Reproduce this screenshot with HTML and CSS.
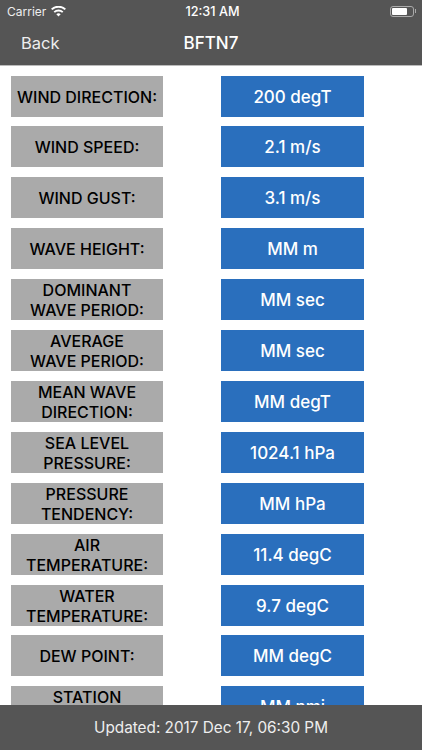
FILE: index.html
```html
<!DOCTYPE html>
<html lang="en">
<head>
<meta charset="utf-8">
<title>BFTN7</title>
<link rel="stylesheet" href="styles.css">
</head>
<body>
<div class="app">
  <header class="top">
    <div class="status">
      <div class="status-left">
        <span>Carrier</span>
        <svg class="wifi" width="15" height="11" viewBox="0 0 15 11"><path d="M7.5 10.6 5.3 8.2a3.2 3.2 0 0 1 4.4 0zM3.9 6.8 2.6 5.4a7.2 7.2 0 0 1 9.8 0l-1.3 1.4a5.3 5.3 0 0 0-7.2 0zM1.4 4.1 0 2.7a11 11 0 0 1 15 0l-1.4 1.4a9 9 0 0 0-12.2 0z" fill="#fff"/></svg>
      </div>
      <div class="status-time">12:31 AM</div>
      <div class="status-right">
        <div class="battery"><div class="battery-level"></div></div>
        <div class="battery-cap"></div>
      </div>
    </div>
    <nav class="nav">
      <span class="back">Back</span>
      <span class="title">BFTN7</span>
    </nav>
  </header>
  <main class="list">
    <div class="row"><div class="label">WIND DIRECTION:</div><div class="value">200 degT</div></div>
    <div class="row"><div class="label">WIND SPEED:</div><div class="value">2.1 m/s</div></div>
    <div class="row"><div class="label">WIND GUST:</div><div class="value">3.1 m/s</div></div>
    <div class="row"><div class="label">WAVE HEIGHT:</div><div class="value">MM m</div></div>
    <div class="row"><div class="label">DOMINANT<br>WAVE PERIOD:</div><div class="value">MM sec</div></div>
    <div class="row"><div class="label">AVERAGE<br>WAVE PERIOD:</div><div class="value">MM sec</div></div>
    <div class="row"><div class="label">MEAN WAVE<br>DIRECTION:</div><div class="value">MM degT</div></div>
    <div class="row"><div class="label">SEA LEVEL<br>PRESSURE:</div><div class="value">1024.1 hPa</div></div>
    <div class="row"><div class="label">PRESSURE<br>TENDENCY:</div><div class="value">MM hPa</div></div>
    <div class="row"><div class="label">AIR<br>TEMPERATURE:</div><div class="value">11.4 degC</div></div>
    <div class="row"><div class="label">WATER<br>TEMPERATURE:</div><div class="value">9.7 degC</div></div>
    <div class="row"><div class="label">DEW POINT:</div><div class="value">MM degC</div></div>
    <div class="row"><div class="label">STATION<br>DISTANCE:</div><div class="value">MM nmi</div></div>
  </main>
  <footer class="foot">Updated: 2017 Dec 17, 06:30 PM</footer>
</div>
</body>
</html>
```
FILE: styles.css
```css
* { box-sizing: border-box; }
html, body { margin: 0; padding: 0; }
body { font-family: Inter, "Liberation Sans", sans-serif; background: #fff; }
.app { width: 422px; height: 750px; display: flex; flex-direction: column; overflow: hidden; }
.top { flex: none; height: 66px; background: #555; color: #fff; border-bottom: 1px solid #bbb; }
.status { height: 22px; display: flex; align-items: center; justify-content: space-between; padding: 0 6px 0 7px; font-size: 12px; position: relative; }
.status-left { display: flex; align-items: center; gap: 5px; color: #eee; }
.status-time { position: absolute; left: 0; right: 0; text-align: center; font-weight: 500; font-size: 12.7px; padding-left: 3px; }
.status-right { display: flex; align-items: center; gap: 1px; }
.battery { width: 24px; height: 11px; border: 1px solid #aaa; border-radius: 3px; padding: 1px; }
.battery-level { width: 15px; height: 100%; background: #fff; border-radius: 1px; }
.battery-cap { width: 1px; height: 4px; background: #aaa; }
.nav { height: 43px; display: flex; align-items: center; position: relative; padding: 0 0 1px 21px; }
.back { color: #eee; font-size: 16.5px; }
.title { position: absolute; left: 0; right: 0; text-align: center; font-weight: 500; font-size: 17px; }
.list { flex: 1; min-height: 0; overflow: hidden; padding: 9.6px 0 0 11px; display: flex; flex-direction: column; gap: 9.9px; }
.row { flex: none; height: 41px; display: flex; gap: 58px; }
.label, .value { display: flex; align-items: center; justify-content: center; text-align: center; padding-top: 1px; }
.label { width: 152px; background: #aaa; color: #000; font-size: 16px; font-weight: 500; line-height: 20px; }
.value { width: 143px; background: #2a6fbd; color: #fff; font-size: 17px; font-weight: 500; }
.foot { flex: none; height: 45px; background: #555; color: #eee; display: flex; align-items: center; justify-content: center; font-size: 15.3px; }
```
